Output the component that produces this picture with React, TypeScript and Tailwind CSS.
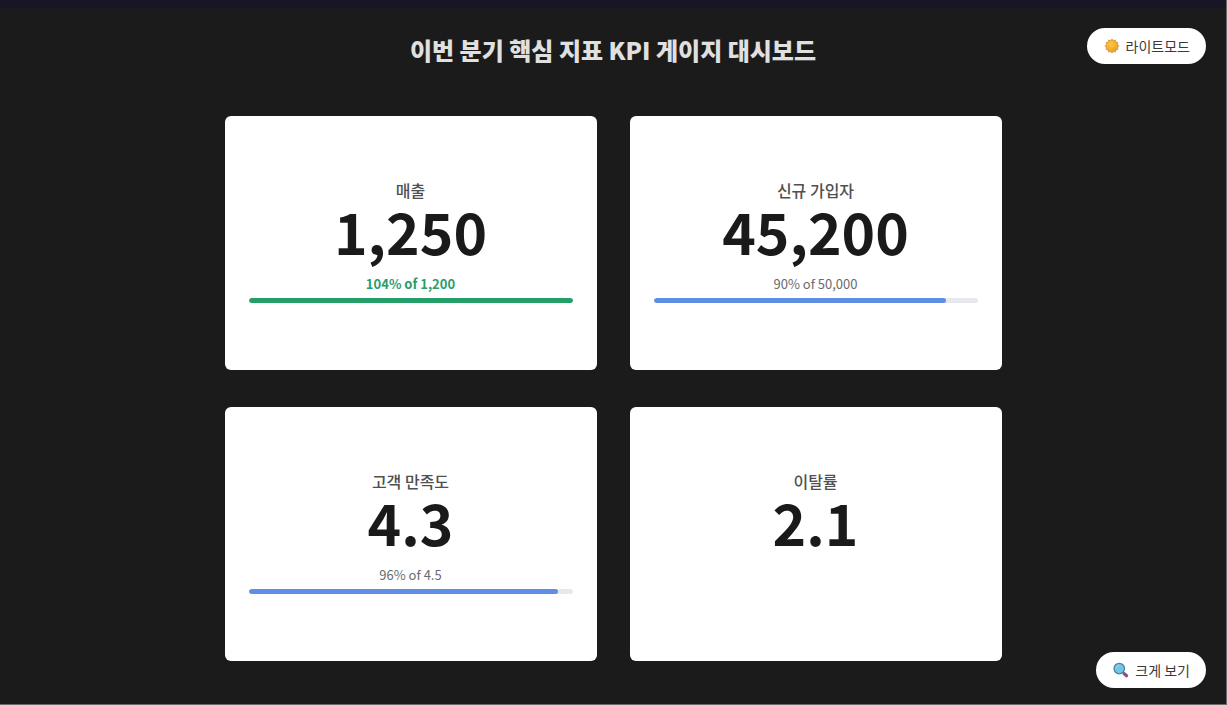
import type { ReactNode } from "react";

type Kpi = { label: string; value: string; percent?: number; target?: string };

const kpis: Kpi[] = [
  { label: "매출", value: "1,250", percent: 104, target: "1,200" },
  { label: "신규 가입자", value: "45,200", percent: 90.4, target: "50,000" },
  { label: "고객 만족도", value: "4.3", percent: 95.6, target: "4.5" },
  { label: "이탈률", value: "2.1" },
];

function SunIcon() {
  const rays = Array.from({ length: 12 }, (_, i) => i * 30);
  return (
    <svg viewBox="0 0 32 32" className="size-4" aria-hidden="true">
      <defs>
        <radialGradient id="sun" cx="0.4" cy="0.35" r="0.7">
          <stop offset="0" stopColor="#f9c843" />
          <stop offset="1" stopColor="#e9a024" />
        </radialGradient>
      </defs>
      {rays.map((a) => (
        <path key={a} d="M12 5.5 L16 1 L20 5.5 Z" fill="#e0a35a" transform={`rotate(${a} 16 16)`} />
      ))}
      <circle cx="16" cy="16" r="12" fill="url(#sun)" stroke="#dc9835" strokeWidth="1" />
    </svg>
  );
}

function MagnifierIcon() {
  return (
    <svg viewBox="0 0 32 32" className="size-4" aria-hidden="true">
      <path d="M19 20 L22 23" stroke="#4d5663" strokeWidth="3" />
      <path d="M22.5 23.5 L27 27.5" stroke="#85528c" strokeWidth="6.5" strokeLinecap="round" />
      <circle cx="12.5" cy="13" r="10.5" fill="#6fc6e6" stroke="#557f98" strokeWidth="2.5" />
      <path d="M6.5 12 A6.5 6.5 0 0 1 12.5 6.5" fill="none" stroke="#91daef" strokeWidth="2" strokeLinecap="round" />
    </svg>
  );
}

function PillButton({ icon, children, className }: { icon: ReactNode; children: ReactNode; className: string }) {
  return (
    <button
      type="button"
      className={`fixed right-[21px] flex h-9 cursor-pointer items-center gap-1.5 rounded-full bg-white pr-4 pl-[17px] text-sm text-[#3a3a3a] ${className}`}
    >
      {icon}
      {children}
    </button>
  );
}

function KpiCard({ label, value, percent, target }: Kpi) {
  const reached = percent !== undefined && percent >= 100;
  return (
    <section className="flex min-h-[254px] flex-col items-center rounded-md bg-white px-6 pt-[62px] text-center">
      <h2 className="text-base leading-6 font-medium text-[#505050]">{label}</h2>
      <p className="text-[57px] leading-[56px] font-bold text-[#1a1a1a]">{value}</p>
      {percent !== undefined && (
        <>
          <p className={`mt-4 text-[13px] leading-5 ${reached ? "font-bold text-[#2a9d6c]" : "text-[#6b6b6b]"}`}>
            {Math.round(percent)}% of {target}
          </p>
          <div
            role="progressbar"
            aria-label={label}
            aria-valuenow={Math.min(percent, 100)}
            className="mt-1 h-[5px] w-full overflow-hidden rounded-full bg-[#e7e8ee]"
          >
            <div
              className={`h-full rounded-full ${reached ? "bg-[#259f68]" : "bg-[#5f8fe4]"}`}
              style={{ width: `${Math.min(percent, 100)}%` }}
            />
          </div>
        </>
      )}
    </section>
  );
}

export default function App() {
  return (
    <div className="flex min-h-screen flex-col border-r border-b border-[#6b6b6b] bg-[#1b1b1b] font-['Noto_Sans_CJK_KR',sans-serif]">
      <div className="h-2 bg-[#181527]" />
      <header className="pt-6">
        <h1 className="text-center text-2xl leading-9 font-extrabold text-[#e0e0e0]">
          이번 분기 핵심 지표 KPI 게이지 대시보드
        </h1>
      </header>
      <main className="mx-auto mt-12 grid w-full max-w-[777px] grid-cols-2 gap-x-[33px] gap-y-[37px] pb-10">
        {kpis.map((kpi) => (
          <KpiCard key={kpi.label} {...kpi} />
        ))}
      </main>
      <PillButton icon={<SunIcon />} className="top-7">
        라이트모드
      </PillButton>
      <PillButton icon={<MagnifierIcon />} className="bottom-[17px]">
        크게 보기
      </PillButton>
    </div>
  );
}
